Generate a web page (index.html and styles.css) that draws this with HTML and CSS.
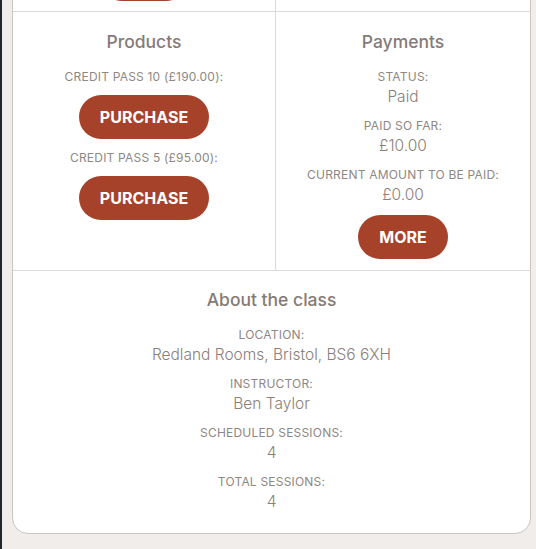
FILE: index.html
```html
<!DOCTYPE html>
<html lang="en">
<head>
<meta charset="utf-8">
<title>Class</title>
<link rel="stylesheet" href="styles.css">
</head>
<body>
<div class="card">
  <div class="cell left top-cell">
    <span class="btn btn-top" aria-label="Book"></span>
  </div>
  <div class="cell right top-cell"></div>

  <div class="cell left">
    <h2 class="heading">Products</h2>
    <div class="product">
      <div class="label">Credit Pass 10 (£190.00):</div>
      <button class="btn">PURCHASE</button>
    </div>
    <div class="product">
      <div class="label">Credit Pass 5 (£95.00):</div>
      <button class="btn">PURCHASE</button>
    </div>
  </div>
  <div class="cell right">
    <h2 class="heading">Payments</h2>
    <div class="field">
      <div class="label">Status:</div>
      <div class="value">Paid</div>
    </div>
    <div class="field">
      <div class="label">Paid so far:</div>
      <div class="value">£10.00</div>
    </div>
    <div class="field">
      <div class="label">Current amount to be paid:</div>
      <div class="value">£0.00</div>
    </div>
    <button class="btn btn-more">MORE</button>
  </div>

  <div class="cell full">
    <h2 class="heading">About the class</h2>
    <div class="field">
      <div class="label">Location:</div>
      <div class="value">Redland Rooms, Bristol, BS6 6XH</div>
    </div>
    <div class="field">
      <div class="label">Instructor:</div>
      <div class="value">Ben Taylor</div>
    </div>
    <div class="field">
      <div class="label">Scheduled sessions:</div>
      <div class="value">4</div>
    </div>
    <div class="field">
      <div class="label">Total sessions:</div>
      <div class="value">4</div>
    </div>
  </div>
</div>
</body>
</html>
```

FILE: styles.css
```css
html, body {
  margin: 0;
  background: #f1edea;
}
body {
  border-left: 2px solid #23272b;
  padding: 0 5px 0 10px;
  min-height: 549px;
  box-sizing: border-box;
  overflow: hidden;
  font-family: Inter, "Noto Sans", "Liberation Sans", sans-serif;
  color: #8a817c;
}
.card {
  width: 519px;
  box-sizing: border-box;
  margin-top: -60px;
  background: #ffffff;
  border: 1px solid #c9c5c2;
  border-radius: 16px;
  display: grid;
  grid-template-columns: 263px 1fr;
}
.cell {
  padding: 18px 10px 11px;
  display: flex;
  flex-direction: column;
  align-items: center;
  text-align: center;
  border-bottom: 1px solid #dcdbda;
}
.cell.top-cell {
  padding: 16px 10px 10px;
}
.cell.left {
  border-right: 1px solid #dcdbda;
}
.cell.full {
  grid-column: 1 / -1;
  border-bottom: none;
  padding: 17px 10px 20px;
}
.heading {
  margin: 0 0 15px;
  font-size: 17.5px;
  line-height: 24px;
  font-weight: 500;
  color: #857b76;
}
.label {
  font-size: 12px;
  line-height: 16px;
  letter-spacing: 0.2px;
  text-transform: uppercase;
  color: #8e8783;
}
.value {
  padding-top: 1px;
  font-size: 15.5px;
  line-height: 22px;
  font-weight: 300;
  color: #8a807b;
}
.field {
  display: flex;
  flex-direction: column;
  align-items: center;
  margin-bottom: 10px;
}
.field:last-child {
  margin-bottom: 0;
}
.product {
  display: flex;
  flex-direction: column;
  align-items: center;
  gap: 10px;
  margin-bottom: 11px;
}
.btn {
  display: inline-flex;
  align-items: center;
  justify-content: center;
  box-sizing: border-box;
  height: 44px;
  padding: 0 21px;
  border: none;
  border-radius: 22px;
  background: #a7422a;
  color: #ffffff;
  font-family: inherit;
  font-size: 16px;
  font-weight: 700;
  letter-spacing: 0;
}
.btn-more {
  margin-top: -1px;
}
.btn-top {
  width: 88px;
}
```
